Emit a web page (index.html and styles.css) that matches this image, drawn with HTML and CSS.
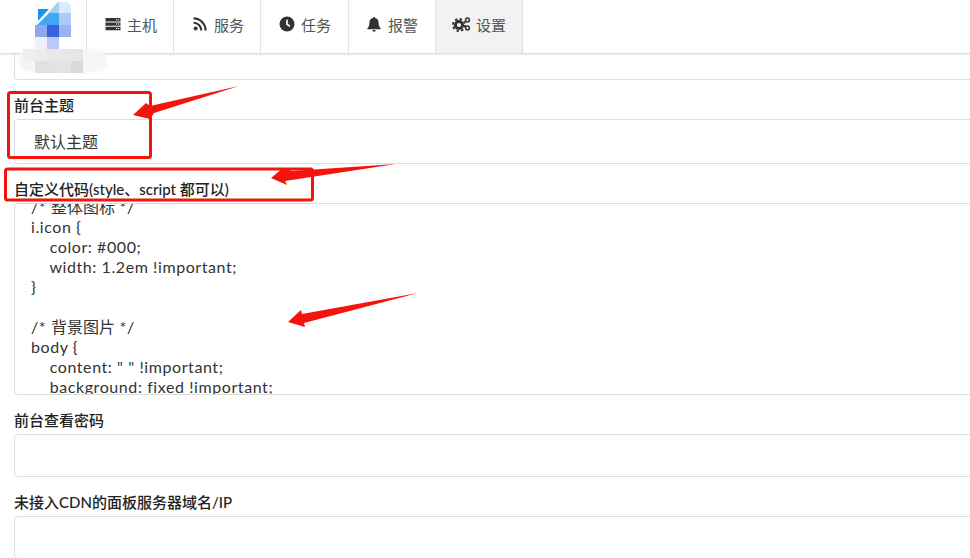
FILE: index.html
```html
<!DOCTYPE html>
<html lang="zh-CN">
<head>
<meta charset="utf-8">
<title>设置</title>
<link rel="stylesheet" href="styles.css">
</head>
<body>
<nav class="nav">
  <div class="nav-logo"></div>
  <a class="nav-item"><svg class="icon" viewBox="0 0 16 16"><path d="M.5 2h15v3.400H.5zM.5 6.400h15v3.400H.5zM.5 10.800h15v3.400H.5z" fill="#333"/><path d="M11 3.200h1.200v1H11zM13 3.200h1.200v1H13zM11 7.600h1.200v1H11zM13 7.600h1.200v1H13zM11 12h1.200v1H11zM13 12h1.200v1H13z" fill="#fff"/></svg>主机</a>
  <a class="nav-item"><svg class="icon" viewBox="0 0 16 16"><circle cx="3.600" cy="12.600" r="2" fill="#333"/><path d="M1.600 6.700a7.700 7.700 0 0 1 7.700 7.700M1.600 2.400a12 12 0 0 1 12 12" fill="none" stroke="#333" stroke-width="2.100"/></svg>服务</a>
  <a class="nav-item nav-item-wide"><svg class="icon" viewBox="0 0 16 16"><circle cx="8" cy="8" r="7.500" fill="#333"/><path d="M8 3.700v4.600l2.800 2" fill="none" stroke="#fff" stroke-width="1.700"/></svg>任务</a>
  <a class="nav-item nav-item-tight"><svg class="icon" viewBox="0 0 16 16"><path d="M8 1a1 1 0 0 1 1 1.100c2.300.5 3.600 2.200 3.600 4.600 0 3.200 1 4.400 2 5.500v1H1.400v-1c1-1.100 2-2.300 2-5.500C3.400 4.300 4.700 2.600 7 2.100A1 1 0 0 1 8 1zM6.300 14.100h3.400a1.700 1.700 0 0 1-3.400 0z" fill="#333"/></svg>报警</a>
  <a class="nav-item nav-item-active"><svg class="icon icon-wide" viewBox="0 0 20 16"><circle cx="7" cy="9" r="3.600" fill="none" stroke="#333" stroke-width="3"/><circle cx="7" cy="9" r="6" fill="none" stroke="#333" stroke-width="2" stroke-dasharray="2.400 2.300"/><circle cx="15.500" cy="4" r="1.900" fill="none" stroke="#333" stroke-width="1.500"/><circle cx="15.500" cy="12" r="1.900" fill="none" stroke="#333" stroke-width="1.500"/></svg>设置</a>
</nav>

<main class="form">
  <div class="box box-cut"></div>

  <section class="field">
    <label class="label">前台主题</label>
    <div class="box box-select">默认主题</div>
  </section>

  <section class="field">
    <label class="label">自定义代码(style、script 都可以)</label>
    <div class="box box-code"><pre class="code">/* <span class="cjk">整体图标</span> */
i.icon {
    color: #000;
    width: 1.2em !important;
}

/* <span class="cjk">背景图片</span> */
body {
    content: " " !important;
    background: fixed !important;
}</pre></div>
  </section>

  <section class="field">
    <label class="label">前台查看密码</label>
    <div class="box box-input"></div>
  </section>

  <section class="field">
    <label class="label">未接入CDN的面板服务器域名/IP</label>
    <div class="box box-input"></div>
  </section>
</main>

<svg class="mosaic" viewBox="0 0 120 90" width="120" height="90" aria-hidden="true">
  <g class="mosaic-soft">
    <rect x="19" y="50" width="88" height="22" rx="10" fill="#f6f6f6"/>
  </g>
  <g>
    <path d="M48 13 58 2H59V13z" fill="#9fd0f5"/>
    <path d="M59 2H68L71 6V13H59z" fill="#d8ecfb"/>
    <path d="M38 9H49L38 21z" fill="#1197f0"/>
    <path d="M37 25 49 13H59V25z" fill="#3fa9f5"/>
    <rect x="59" y="13" width="12" height="12" fill="#aecbf5"/>
    <rect x="35" y="25" width="12" height="12" fill="#8fa8ec"/>
    <rect x="47" y="25" width="12" height="12" fill="#3b62dd"/>
    <rect x="59" y="25" width="12" height="12" fill="#9db2ee"/>
    <rect x="35" y="37" width="12" height="12" fill="#edf1fd"/>
    <rect x="47" y="37" width="12" height="12" fill="#bcc9f4"/>
    <rect x="23" y="49" width="12" height="12" fill="#eeeeee"/>
    <rect x="35" y="49" width="12" height="12" fill="#ececec"/>
    <rect x="47" y="49" width="12" height="12" fill="#e8e8e8"/>
    <rect x="59" y="49" width="12" height="12" fill="#e7e7e7"/>
    <rect x="71" y="49" width="12" height="12" fill="#e6e6e6"/>
    <rect x="23" y="61" width="12" height="8" fill="#f3f3f3"/>
    <rect x="35" y="61" width="12" height="12" fill="#e0e0e0"/>
    <rect x="47" y="61" width="12" height="12" fill="#e2e2e2"/>
    <rect x="59" y="61" width="12" height="12" fill="#e4e4e4"/>
    <rect x="71" y="61" width="12" height="12" fill="#d9d9d9"/>
  </g>
</svg>

<svg class="marks" viewBox="0 0 970 558" width="970" height="558" aria-hidden="true">
  <rect class="mark-box" x="8.500" y="92.500" width="142" height="65" rx="2"/>
  <rect class="mark-box" x="5.500" y="169" width="307" height="31" rx="2"/>
  <path class="mark-arrow" d="M133 115 146 103 150 106 239 86 154 113 150 119z"/>
  <path class="mark-arrow" d="M271 178 283 168 292 171 396 164 285 181 287 185z"/>
  <path class="mark-arrow" d="M288 322 301 310 302 314 418 293 304 323 305 327z"/>
</svg>
</body>
</html>
```
FILE: styles.css
```css
* { box-sizing: border-box; }
html, body { margin: 0; height: 100%; overflow: hidden; }
body {
  position: relative;
  width: 970px;
  height: 558px;
  background: #fff;
  color: #333;
  font-family: Lato, "Noto Sans CJK SC", sans-serif;
}
.nav {
  display: flex;
  height: 53px;
  padding-left: 14px;
  background: #fff;
  box-shadow: 0 1px 2px rgba(34, 36, 38, .22);
  position: relative;
}
.nav-logo { width: 72px; }
.nav-item {
  display: flex;
  align-items: center;
  gap: 6px;
  width: 87px;
  padding: 0 0 5px 18px;
  border-left: 1px solid #e4e4e4;
  font-size: 15px;
  color: #555;
}
.nav-item-wide { width: 88px; }
.nav-item-tight { padding-left: 17px; }
.nav-item-active {
  width: 88px;
  background: #f2f2f2;
  border-right: 1px solid #e0e0e0;
  padding-left: 16px;
  gap: 4px;
}
.icon { width: 16px; height: 16px; flex: none; }
.icon-wide { width: 20px; height: 16px; }
.form { padding-left: 14px; }
.box {
  width: 1000px;
  background: #fff;
  border: 1px solid #dedede;
  border-radius: 4px;
}
.box-cut { height: 27px; border-top: 0; border-radius: 0 0 4px 4px; }
.field { display: flex; flex-direction: column; margin-top: 16px; }
.label {
  height: 23px;
  line-height: 18px;
  font-size: 15px;
  font-weight: 500;
  color: #222;
}
.box-select {
  height: 45px;
  padding-left: 19px;
  line-height: 44px;
  font-size: 16px;
  color: #333;
}
.box-code {
  height: 192px;
  padding-left: 16px;
  overflow: hidden;
}
.code {
  margin: -7px 0 0;
  font-family: inherit;
  font-size: 16px;
  line-height: 20px;
  letter-spacing: .58px;
  color: #333;
}
.cjk { letter-spacing: 0; }
.box-input { height: 43px; }
.mosaic { position: absolute; left: 0; top: 0; }
.mosaic-soft { filter: blur(1.500px); }
.marks { position: absolute; left: 0; top: 0; pointer-events: none; }
.mark-box { fill: none; stroke: #f5130d; stroke-width: 3; }
.mark-arrow { fill: #f5130d; }
```
